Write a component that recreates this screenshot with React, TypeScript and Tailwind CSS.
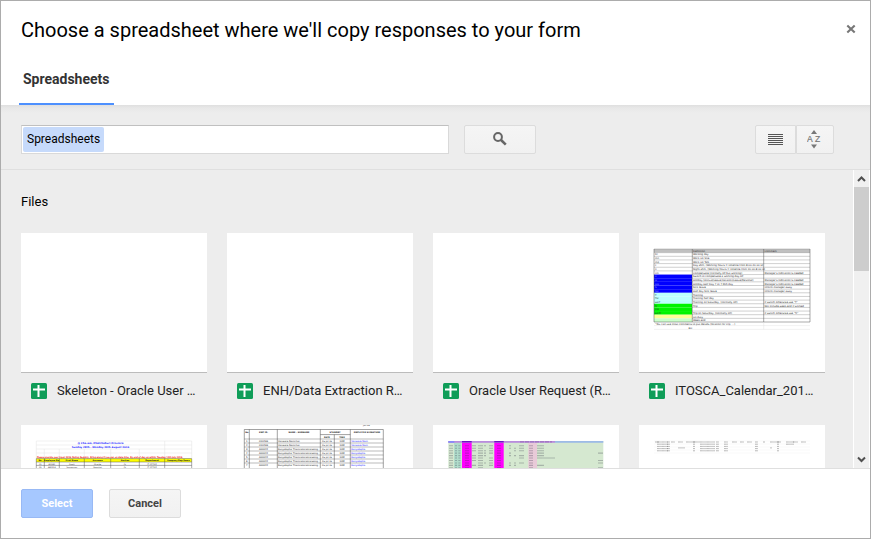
import type { ReactNode } from "react";

const thumbFont = "DejaVu Sans, Verdana, sans-serif";

function Thumb({ children }: { children?: ReactNode }) {
  return (
    <svg viewBox="0 0 186 139" className="block w-full" fontFamily={thumbFont} aria-hidden="true">
      {children}
    </svg>
  );
}

const calendarRows: [string, string, string, string][] = [
  ["", "Definition", "Comment", "#c0c0c0"],
  ["Di", "Working day", "", "#fff"],
  ["mn", "Work On Site", "", "#fff"],
  ["mp", "Work On Talk", "", "#fff"],
  ["c", "Day shift, (Working hours = timeline from 8.00-20.00 H)", "", "#fff"],
  ["n", "Night shift, (Working hours = timeline from 20.00-8.00 H)", "", "#fff"],
  ["cm", "Compensate (normally off but working)", "Manager's indication is needed", "#fff"],
  ["C", "Switch to compensate a working day off", "", "#00f"],
  ["H", "Holiday (Annual/Leave/Vacation/Leave/Personal)", "Manager's indication is needed", "#00f"],
  ["HH", "Holiday Half Day 7 to 7 Mth day", "Manager's indication is needed", "#00f"],
  ["S", "Sick leave", "Inform manager away", "#00f"],
  ["SH", "Half day Sick leave", "Inform manager away", "#00f"],
  ["T", "Training", "", "#bff"],
  ["TH", "Training half day", "", "#bff"],
  ["satT", "Training on Saturday, (normally off)", "If switch otherwise use \"T\"", "#bff"],
  ["Tr", "Trip", "Not include week-end if worked", "#00f400"],
  ["trH", "", "", "#00f400"],
  ["satTr", "Trip on Saturday, (normally off)", "If switch otherwise use \"Tr\"", "#00f400"],
  ["", "On duty", "", "#ffff99"],
  ["", "Week-end", "", "#ccffcc"],
];

function CalendarThumb() {
  const row = 3.65;
  return (
    <Thumb>
      <g fontSize="2.5" fill="#222">
        {calendarRows.map(([code, text, note, fill], i) => {
          const y = 16 + i * row;
          return (
            <g key={i}>
              <rect x="15" y={y} width={i === 0 ? 156 : 38} height={row} fill={fill} />
              <path d={i === 0 || fill === "#fff" ? `M15 ${y}H171` : `M53 ${y}H171`} stroke="#777" strokeWidth=".35" />
              <text x="16" y={y + 2.8} fill={fill === "#00f" ? "#99f" : "#333"}>{code}</text>
              <text x="54" y={y + 2.8}>{text}</text>
              <text x="125.5" y={y + 2.8}>{note}</text>
            </g>
          );
        })}
        <path d="M15 16V89H171V16M53.3 16V89M124.7 16V89" fill="none" stroke="#555" strokeWidth=".5" />
        <path d="M15 92.6H171M15 96.4H171M124.7 89V96.4" stroke="#ddd" strokeWidth=".4" />
        <text x="16" y="92">"You can use most comments to put details (location for trip, ...)</text>
        <text x="49.5" y="95.8">Etc</text>
      </g>
    </Thumb>
  );
}

const rosterCols = [15.3, 23.3, 38.3, 63.3, 89.7, 118.3, 143.7, 170.7];
const rosterRows = [
  ["No.", "Employee No.", "First Name", "Surname", "Section", "Department", "Company/Dep Rama"],
  ["01", "A0040", "Suwit", "Charlie", "Or", "IT OFFICE", ""],
  ["02", "A40136", "Youngyuan", "Somchai", "Or", "IT OFFICE", ""],
];

function RosterThumb() {
  return (
    <Thumb>
      <path d="M15.3 16H170.7M15.3 20H170.7M15.3 24H170.7M15.3 28H170.7M15.3 16V33M23.3 24V33M38.3 24V33M63.3 24V33M89.7 24V33M118.3 24V33M143.7 16V33M170.7 16V33" stroke="#e2e2e2" strokeWidth=".5" />
      <g fontSize="2.5" fontWeight="bold" fill="#22f" textAnchor="middle">
        <text x="79.5" y="19.4">@ Cha-am, Phetchaburi Province</text>
        <text x="79.5" y="23.4">Sunday 28th - Monday 29th August 2016</text>
      </g>
      <text x="16" y="32.8" fontSize="2.2" fill="#f02020" stroke="#f02020" strokeWidth=".1">Please provide your input 2016 Outing Registry, Bring along if you can on data time. By end of day on within Tuesday 12th July 2016</text>
      <rect x="15.3" y="33.6" width="155.4" height="3.4" fill="#ff0" />
      <path d="M15.3 33.6H170.7M15.3 37H170.7M15.3 40.4H170.7" stroke="#555" strokeWidth=".5" />
      {rosterCols.map((x) => (
        <path key={x} d={`M${x} 33.6V44`} stroke="#555" strokeWidth=".5" />
      ))}
      {rosterRows.map((cells, r) =>
        cells.map((cell, c) => (
          <text key={`${r}-${c}`} x={(rosterCols[c] + rosterCols[c + 1]) / 2} y={36.2 + r * 3.4} fontSize="2" textAnchor="middle" fontWeight={r === 0 ? "bold" : "normal"} fill="#222">
            {cell}
          </text>
        )),
      )}
    </Thumb>
  );
}

const signatures = [
  ["1", "010299", "Vanware Namchai", "05-Jul-16", "10M"],
  ["2", "010299", "Vanware Namchai", "05-Jul-16", "10M"],
  ["3", "A00042", "Kunyalapha Thamrakorakraiwong", "05-Jul-16", "10M"],
  ["4", "A00042", "Kunyalapha Thamrakorakraiwong", "05-Jul-16", "10M"],
  ["5", "A00042", "Kunyalapha Thamrakorakraiwong", "05-Jul-16", "10M"],
  ["6", "A00042", "Kunyalapha Thamrakorakraiwong", "05-Jul-16", "10M"],
  ["7", "A00042", "Kunyalapha Thamrakorakraiwong", "05-Jul-16", "10M"],
];

function SignatureThumb() {
  return (
    <Thumb>
      <g fontSize="2.4" fill="#222" textAnchor="middle">
        <text x="139.5" y="1">Jul-16</text>
        <g fontWeight="bold" fontSize="2.1">
          <text x="19.8" y="8.2">No</text>
          <text x="36.5" y="8.2">EMP ID.</text>
          <text x="72" y="8.2">NAME - SURNAME</text>
          <text x="108" y="8.2">STANDBY</text>
          <text x="100" y="12.6">DATE</text>
          <text x="115" y="12.6">TIME</text>
          <text x="140" y="8.2">EMPLOYEE SIGNATURE</text>
        </g>
        {signatures.map(([no, id, name, date, time], i) => {
          const y = 17.2 + i * 4;
          return (
            <g key={no}>
              <path d={`M17.3 ${y - 3.2}H156.3`} stroke="#777" strokeWidth=".5" />
              <text x="19.8" y={y}>{no}</text>
              <text x="36.5" y={y}>{id}</text>
              <text x="51" y={y} textAnchor="start">{name}</text>
              <text x="100" y={y} fontSize="2.2">{date}</text>
              <text x="115" y={y}>{time}</text>
              <text x="124.3" y={y} fill="#22f" textAnchor="start">{i < 2 ? "Vanware Nam" : "Kunyalapha"}</text>
            </g>
          );
        })}
      </g>
      <path d="M17.3 44V4.5H156.3V44M22.3 4.5V44M50.3 4.5V44M93.3 4.5V44M107.3 9.6V44M123.3 4.5V44M93.3 9.6H123.3" fill="none" stroke="#444" strokeWidth=".5" />
    </Thumb>
  );
}

const trackerCols: [number, number, number[]][] = [
  [16, 4, [0, 1, 2, 3, 4, 5, 6, 7, 8, 9]],
  [22, 2, [0, 1, 2, 3, 4, 5, 6, 7, 8, 9]],
  [25.5, 2, [0, 1, 2, 3, 4, 5, 6, 7, 8, 9]],
  [32, 4, [0, 1, 2, 3, 4, 5, 6, 7, 8, 9]],
  [39, 4, [0, 1, 2, 4, 5, 6, 8]],
  [45, 5, [0, 1, 2, 3, 4, 5, 6, 7, 8, 9]],
  [51, 2, [0, 2, 3, 4, 7]],
  [56, 4, [0, 1, 2, 3, 5, 6, 7, 8]],
  [64, 4, [0, 1, 2, 3, 4, 5, 6, 7, 8, 9]],
  [76, 2, [0, 1, 3, 4, 7, 8]],
  [81, 2, [1, 2, 4, 7, 8]],
  [86, 5, [0, 1, 2, 4, 5, 7]],
  [96, 4, [0, 1, 2, 3, 4, 5, 6, 7, 8, 9]],
  [104, 7, [0, 1, 2, 3, 4, 8]],
  [104, 18, [5]],
  [165, 5, [3, 6, 7, 9]],
];

function TrackerThumb() {
  return (
    <Thumb>
      <rect x="15.3" y="16" width="155" height="30" fill="#d5e8d0" />
      <rect x="21" y="17.8" width="7.3" height="28" fill="#b0dccb" />
      <rect x="29" y="16.8" width="9.7" height="29" fill="#f0f" />
      <rect x="61.3" y="16.8" width="9.4" height="29" fill="#f0f" />
      <rect x="95.3" y="17.8" width="8.7" height="28" fill="#e8cad8" />
      <rect x="15.3" y="16" width="106.7" height="1.8" fill="#b98ddd" />
      <rect x="15.3" y="16" width="6" height="1.8" fill="#8888f8" />
      <rect x="29" y="16" width="9.7" height="1.4" fill="#6c16c4" />
      <rect x="61.3" y="16" width="9.4" height="1.4" fill="#6c16c4" />
      <rect x="122" y="16" width="48.3" height="1.8" fill="#9dbbe6" />
      <path d="M87 16.9H119" stroke="#8254a0" strokeWidth=".6" strokeDasharray="4 1" />
      {trackerCols.map(([x, width, rows]) =>
        rows.map((r) => (
          <path key={`${x}-${width}-${r}`} d={`M${x} ${20.8 + r * 2.45}h${width}`} stroke="#334" strokeOpacity=".36" strokeWidth="1.1" strokeDasharray=".8 .25" />
        )),
      )}
    </Thumb>
  );
}

const logCols: [number, number, number][] = [
  [16, 4, 1], [18, 5, 4], [23, 6, 4], [28, 3, 4], [32, 4, 1], [39, 5, 1],
  [47, 14, 1], [54, 2, 4], [61, 7, 4], [68, 8, 4], [77, 3, 4], [85, 4, 4],
  [93, 5, 1], [101, 4, 1], [108, 5, 1], [116, 3, 4], [124, 2, 1],
  [131, 11, 1], [138, 2, 4], [147, 8, 2], [154, 5, 1], [162, 5, 1],
];

function LogThumb() {
  return (
    <Thumb>
      {[16, 19, 22, 25, 28].map((y) => (
        <path key={y} d={`M15 ${y}H171`} stroke="#eee" strokeWidth=".4" />
      ))}
      {logCols.map(([x, width, rows]) =>
        Array.from({ length: rows + (rows > 2 ? 1 : 0) }, (_, r) => (
          <path key={`${x}-${r}`} d={`M${x} ${17 + r * 2.2}h${width}`} stroke="#222" strokeOpacity=".36" strokeWidth="1" strokeDasharray=".9 .25" />
        )),
      )}
      <path d="M39 22.9h7M131 22.9h2" stroke="#999" strokeWidth=".6" />
    </Thumb>
  );
}

const files: { name: string; thumb: ReactNode }[] = [
  { name: "Skeleton - Oracle User …", thumb: <Thumb /> },
  { name: "ENH/Data Extraction R…", thumb: <Thumb /> },
  { name: "Oracle User Request (R…", thumb: <Thumb /> },
  { name: "ITOSCA_Calendar_201…", thumb: <CalendarThumb /> },
  { name: "", thumb: <RosterThumb /> },
  { name: "", thumb: <SignatureThumb /> },
  { name: "", thumb: <TrackerThumb /> },
  { name: "", thumb: <LogThumb /> },
];

function SheetIcon() {
  return (
    <svg width="16" height="16" viewBox="0 0 16 16" className="shrink-0" aria-hidden="true">
      <rect width="16" height="16" rx="1.5" fill="#0f9d58" />
      <path d="M2 6.5H14M7.5 2V14" stroke="#fff" strokeWidth="2" />
    </svg>
  );
}

function FileCard({ name, thumb }: { name: string; thumb: ReactNode }) {
  return (
    <li>
      <div className="overflow-hidden border-b border-[#bcbcbc] bg-white">{thumb}</div>
      {name && (
        <div className="flex items-center gap-2.5 pt-2 pl-2.5">
          <SheetIcon />
          <span className="text-[13px] leading-5 whitespace-nowrap text-[#222]">{name}</span>
        </div>
      )}
    </li>
  );
}

const greyButton = "border border-[#dcdcdc] bg-linear-to-b from-[#f5f5f5] to-[#f1f1f1]";

export default function App() {
  return (
    <div role="dialog" aria-labelledby="dialog-title" className="flex h-screen flex-col overflow-hidden border border-[#acacac] bg-white font-[Roboto,sans-serif] text-black">
      <header className="shrink-0">
        <div className="flex items-start justify-between pt-[15px] pr-[11px] pl-5">
          <h1 id="dialog-title" className="text-[20px] leading-7">Choose a spreadsheet where we'll copy responses to your form</h1>
          <button type="button" aria-label="Close" className="mt-[5px] flex size-4 items-center justify-center">
            <svg width="10" height="10" viewBox="0 0 10 10" aria-hidden="true">
              <path d="M1.3 1.5L8.7 8.5M8.7 1.5L1.3 8.5" stroke="#777" strokeWidth="2.1" />
            </svg>
          </button>
        </div>
        <nav className="mt-[22px] flex pl-[18px]">
          <button type="button" className="border-b-2 border-[#4d90fe] px-1 pt-[3px] pb-[14px] text-[14px] leading-5 font-bold text-[#333]">
            Spreadsheets
          </button>
        </nav>
      </header>

      <div className="flex shrink-0 items-center border-b border-[#dfdfdf] bg-[linear-gradient(#dfdfdf,#e8e8e8_3px,#ededed_8px)] pt-5 pr-9 pb-[15px] pl-5">
        <div className="flex h-[29px] w-[428px] items-center border border-[#d9d9d9] border-t-[#c0c0c0] bg-white px-px">
          <span className="rounded-[2px] bg-[#c6dafb] px-1 text-[12px] leading-[25px]">Spreadsheets</span>
          <input aria-label="Search files" className="min-w-0 flex-1 px-1 text-[12px] outline-none" />
        </div>
        <button type="button" aria-label="Search" className={`ml-[15px] flex h-[29px] w-[72px] items-center justify-center rounded-[2px] ${greyButton}`}>
          <svg width="14" height="14" viewBox="0 0 14 14" fill="none" stroke="#666" className="-mt-0.5" aria-hidden="true">
            <circle cx="5" cy="5" r="3.9" strokeWidth="2" />
            <path d="M7.8 7.8L12.8 12.6" strokeWidth="2.6" />
          </svg>
        </button>
        <div className="ml-auto flex">
          <button type="button" aria-label="List view" className={`flex h-[29px] w-[41px] items-center justify-center rounded-l-[2px] ${greyButton}`}>
            <svg width="15" height="11" viewBox="0 0 15 11" fill="#555" aria-hidden="true">
              <path d="M0 0h15v1H0zM0 2h15v1H0zM0 4h15v1H0zM0 6h15v1H0zM0 8h15v1H0zM0 10h15v1H0z" />
            </svg>
          </button>
          <button type="button" aria-label="Sort" className={`flex h-[29px] w-[38px] items-center justify-center rounded-r-[2px] ${greyButton}`}>
            <svg width="16" height="19" viewBox="0 0 16 19" fill="#777" aria-hidden="true">
              <path d="M4 4L7 0L10 4ZM4 14.5L7 18.5L10 14.5Z" />
              <text x="0" y="12" fontSize="8.5" fontFamily="Liberation Sans, Arial, sans-serif" stroke="#777" strokeWidth=".2">A</text>
              <text x="8" y="12" fontSize="8.5" fontFamily="Liberation Sans, Arial, sans-serif" stroke="#777" strokeWidth=".2">Z</text>
            </svg>
          </button>
        </div>
      </div>

      <main className="flex min-h-0 flex-1 bg-[#ededed]">
        <section className="min-w-0 flex-1 overflow-hidden pt-[22px] pl-5">
          <h2 className="text-[13px] leading-5">Files</h2>
          <ul className="mt-[21px] grid auto-rows-[192px] grid-cols-[repeat(auto-fill,186px)] gap-x-5">
            {files.map((file, i) => (
              <FileCard key={i} {...file} />
            ))}
          </ul>
        </section>
        <div aria-hidden="true" className="flex w-[17px] shrink-0 flex-col items-center border-x border-white bg-[#f0f0f0]">
          <svg width="15" height="17" viewBox="0 0 15 17" className="shrink-0" fill="none" stroke="#505050" strokeWidth="2">
            <path d="M4 11L7.5 7.5L11 11" />
          </svg>
          <div className="h-[84px] w-full bg-[#cdcdcd]" />
          <svg width="15" height="17" viewBox="0 0 15 17" className="mt-auto shrink-0" fill="none" stroke="#505050" strokeWidth="2">
            <path d="M4 6.5L7.5 10L11 6.5" />
          </svg>
        </div>
      </main>

      <footer className="flex shrink-0 gap-4 border-t border-[#dfdfdf] px-5 py-5 text-[11px] font-bold">
        <button type="button" className="h-[29px] w-[72px] rounded-[2px] border border-[#98b9f5] bg-[#a6c8ff] pt-px text-white">Select</button>
        <button type="button" className={`h-[29px] w-[72px] rounded-[2px] pt-px text-[#444] ${greyButton}`}>Cancel</button>
      </footer>
    </div>
  );
}
